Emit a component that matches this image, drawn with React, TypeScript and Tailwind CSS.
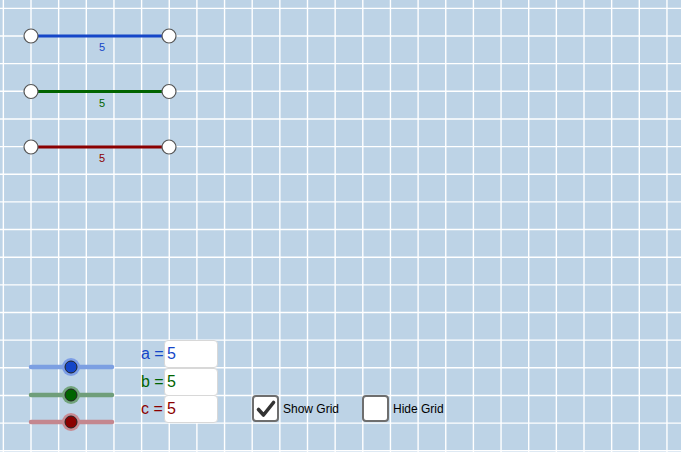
const W = 681;
const H = 452;
const STEP = 27.65;
const OX = 31;
const OY = 36;

const xs: number[] = [];
for (let x = OX - STEP; x < W; x += STEP) xs.push(x);
const ys: number[] = [];
for (let y = OY - STEP; y < H; y += STEP) ys.push(y);

const segments = [
  { y: 36, color: '#1546c8' },
  { y: 91.5, color: '#006400' },
  { y: 147, color: '#8b0000' },
];

const sliders = [
  { y: 367, track: '#7c9fe2', halo: '#7d9ee6', knob: '#1546c8' },
  { y: 395, track: '#6f9e7a', halo: '#72a47c', knob: '#006400' },
  { y: 422, track: '#c4878f', halo: '#c88a92', knob: '#8b0000' },
];

const fields = [
  { name: 'a', color: 'text-[#1546c8]' },
  { name: 'b', color: 'text-[#006400]' },
  { name: 'c', color: 'text-[#8b0000]' },
];

function CheckBox({ checked, label }: { checked: boolean; label: string }) {
  return (
    <div className="flex items-center gap-[4px] w-[110px]">
      <div className="w-[27px] h-[27px] rounded-[4px] border-2 border-[#6e6e6e] bg-white flex items-center justify-center">
        {checked && (
          <svg width="22" height="22" viewBox="0 0 22 22">
            <path d="M3.5 11.5 L8.5 17 L18.5 4.5" fill="none" stroke="#333333" strokeWidth="3.6" strokeLinecap="round" strokeLinejoin="round" />
          </svg>
        )}
      </div>
      <span className="text-[12px] text-black">{label}</span>
    </div>
  );
}

export default function App() {
  return (
    <div
      className="relative w-[681px] h-[452px] overflow-hidden bg-[#bdd3e6]"
      style={{ fontFamily: '"Liberation Sans", Arial, sans-serif' }}
    >
      <svg className="absolute inset-0" width={W} height={H}>
        {xs.map((x) => (
          <line key={'x' + x} x1={x} y1={0} x2={x} y2={H} stroke="#ffffff" strokeWidth={1.4} />
        ))}
        {ys.map((y) => (
          <line key={'y' + y} x1={0} y1={y} x2={W} y2={y} stroke="#ffffff" strokeWidth={1.4} />
        ))}

        {segments.map((s) => (
          <g key={s.y}>
            <line x1={31} y1={s.y} x2={169} y2={s.y} stroke={s.color} strokeWidth={2.8} />
            <text x={102} y={s.y + 15} fontSize={11} fill={s.color} textAnchor="middle" fontFamily="Liberation Sans, Arial, sans-serif">
              5
            </text>
            <circle cx={31} cy={s.y} r={7} fill="#ffffff" stroke="#555555" strokeWidth={1.2} />
            <circle cx={169} cy={s.y} r={7} fill="#ffffff" stroke="#555555" strokeWidth={1.2} />
          </g>
        ))}

        {sliders.map((s) => (
          <g key={s.y}>
            <line x1={31} y1={s.y} x2={112} y2={s.y} stroke={s.track} strokeWidth={4.5} strokeLinecap="round" />
            <circle cx={71} cy={s.y} r={9} fill={s.halo} />
            <circle cx={71} cy={s.y} r={6} fill={s.knob} stroke="#222222" strokeWidth={1} />
          </g>
        ))}
      </svg>

      <div className="absolute left-[141px] top-[340px] flex flex-col">
        {fields.map((f) => (
          <div key={f.name} className={`flex items-center h-[27.7px] text-[16px] ${f.color}`}>
            <span className="w-[23px]">{f.name} =</span>
            <div className="w-[54px] h-[28px] -my-[0.3px] rounded-[4px] border border-[#d8d8d8] bg-white pl-[2px] flex items-center">
              5
            </div>
          </div>
        ))}
      </div>

      <div className="absolute left-[252px] top-[395px] flex items-center">
        <CheckBox checked label="Show Grid" />
        <CheckBox checked={false} label="Hide Grid" />
      </div>
    </div>
  );
}
